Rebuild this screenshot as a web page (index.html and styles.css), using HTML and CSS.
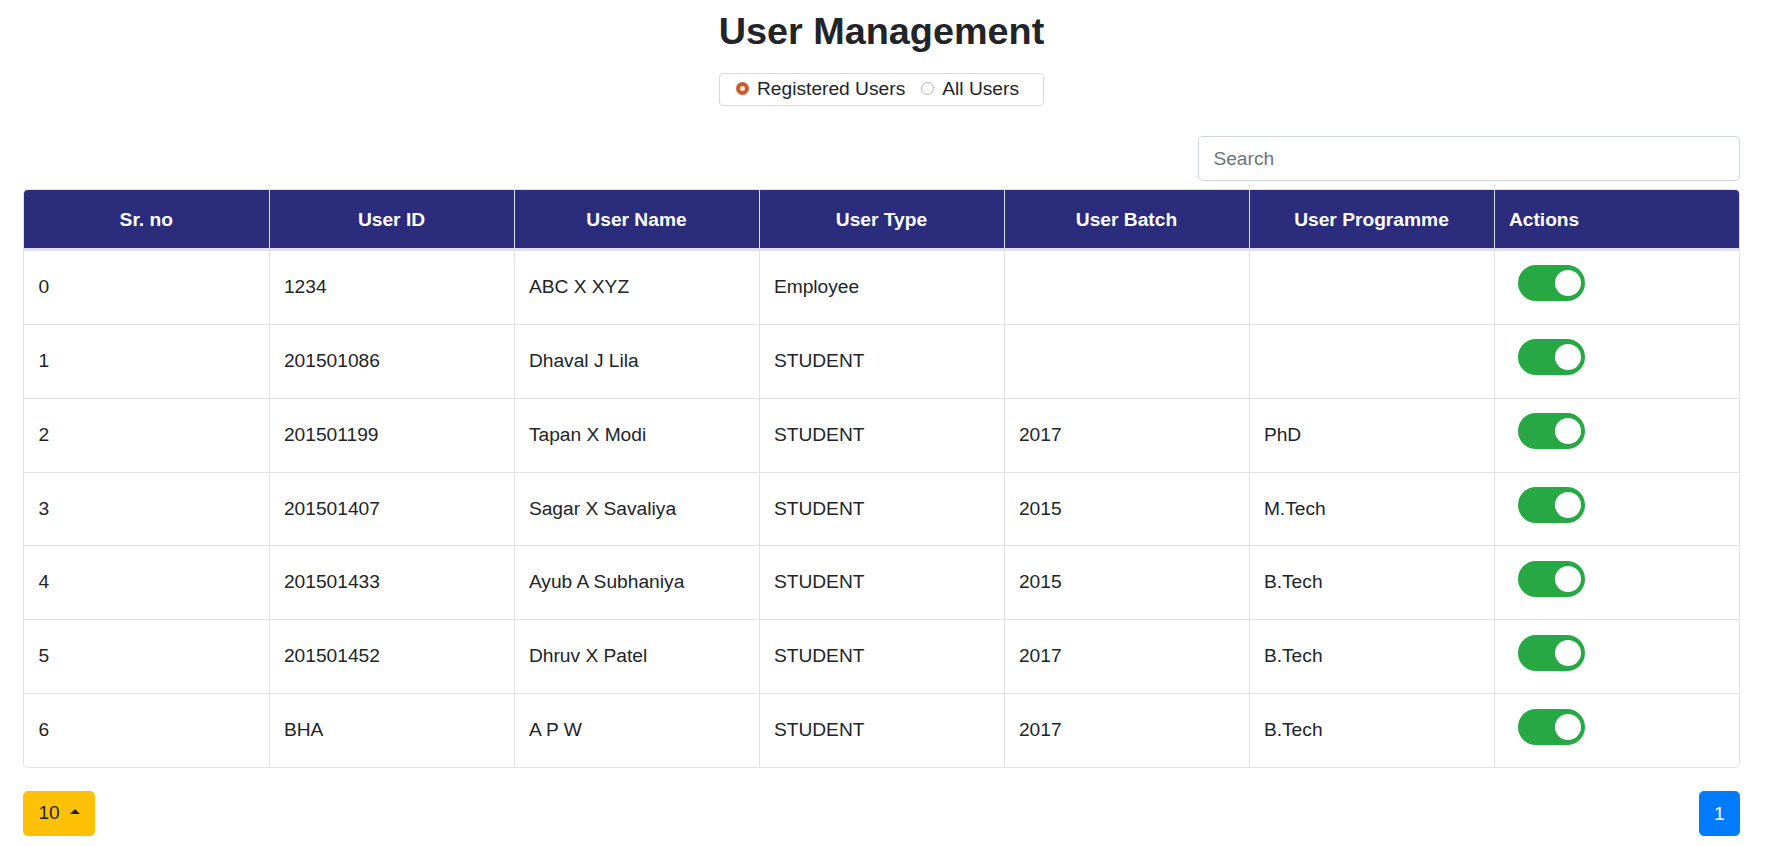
FILE: index.html
```html
<!DOCTYPE html>
<html lang="en">
<head>
<meta charset="utf-8">
<title>User Management</title>
<link rel="stylesheet" href="styles.css">
</head>
<body>
<div class="page">
  <h1 class="title">User Management</h1>
  <div class="filter-row">
    <div class="filter">
      <label class="opt"><span class="radio checked"></span>Registered Users</label>
      <label class="opt"><span class="radio"></span>All Users</label>
    </div>
  </div>
  <div class="search-row">
    <input class="search" type="text" placeholder="Search">
  </div>
  <div class="table-wrap">
    <table class="users">
      <thead>
        <tr>
          <th>Sr. no</th>
          <th>User ID</th>
          <th>User Name</th>
          <th>User Type</th>
          <th>User Batch</th>
          <th>User Programme</th>
          <th class="left">Actions</th>
        </tr>
      </thead>
      <tbody>
        <tr><td>0</td><td>1234</td><td>ABC X XYZ</td><td>Employee</td><td></td><td></td><td><span class="toggle"><span class="knob"></span></span></td></tr>
        <tr><td>1</td><td>201501086</td><td>Dhaval J Lila</td><td>STUDENT</td><td></td><td></td><td><span class="toggle"><span class="knob"></span></span></td></tr>
        <tr><td>2</td><td>201501199</td><td>Tapan X Modi</td><td>STUDENT</td><td>2017</td><td>PhD</td><td><span class="toggle"><span class="knob"></span></span></td></tr>
        <tr><td>3</td><td>201501407</td><td>Sagar X Savaliya</td><td>STUDENT</td><td>2015</td><td>M.Tech</td><td><span class="toggle"><span class="knob"></span></span></td></tr>
        <tr><td>4</td><td>201501433</td><td>Ayub A Subhaniya</td><td>STUDENT</td><td>2015</td><td>B.Tech</td><td><span class="toggle"><span class="knob"></span></span></td></tr>
        <tr><td>5</td><td>201501452</td><td>Dhruv X Patel</td><td>STUDENT</td><td>2017</td><td>B.Tech</td><td><span class="toggle"><span class="knob"></span></span></td></tr>
        <tr><td>6</td><td>BHA</td><td>A P W</td><td>STUDENT</td><td>2017</td><td>B.Tech</td><td><span class="toggle"><span class="knob"></span></span></td></tr>
      </tbody>
    </table>
  </div>
  <div class="footer">
    <button class="size-btn" type="button">10 <span class="caret"></span></button>
    <button class="page-btn" type="button">1</button>
  </div>
</div>
</body>
</html>
```
FILE: styles.css
```css
* { box-sizing: border-box; }
html, body { margin: 0; padding: 0; background: #fff; }
body {
  font-family: "Liberation Sans", Arial, sans-serif;
  font-size: 19.2px;
  line-height: 1.5;
  color: #212529;
}
.page {
  padding: 9px 39px 0 23px;
}
.title {
  margin: 0 0 19px;
  font-size: 37.8px;
  line-height: 1.2;
  font-weight: bold;
  text-align: center;
  color: #212529;
}
.filter-row {
  display: flex;
  justify-content: center;
}
.filter {
  display: flex;
  align-items: center;
  gap: 16px;
  height: 33px;
  width: 325px;
  padding: 0 0 2px 16px;
  border: 1px solid #d6d9dc;
  border-radius: 4px;
}
.opt {
  display: flex;
  align-items: center;
  gap: 8px;
  line-height: 1;
  color: #212529;
}
.radio {
  width: 13px;
  height: 13px;
  border-radius: 50%;
  border: 1px solid #b5b5b5;
  background: #fff;
  flex: none;
}
.radio.checked {
  border: 4px solid #c85a2f;
  background: #fbe9e0;
}
.search-row {
  display: flex;
  justify-content: flex-end;
  margin-top: 30px;
}
.search {
  width: 542px;
  height: 45px;
  padding: 0 14.4px;
  font-family: inherit;
  font-size: 19.2px;
  color: #495057;
  border: 1px solid #ced4da;
  border-radius: 4.8px;
  outline: none;
}
.search::placeholder { color: #6c757d; }
.table-wrap {
  margin-top: 8px;
  border: 1px solid #dee2e6;
  border-radius: 4.8px;
  overflow: hidden;
}
.users {
  width: 100%;
  table-layout: fixed;
  border-collapse: collapse;
}
.users th, .users td {
  border: 1px solid #dee2e6;
  padding: 14.4px;
  vertical-align: middle;
}
.users th {
  padding: 15.6px 14.4px 13.2px;
  background: #2b2c7b;
  color: #fff;
  font-weight: bold;
  text-align: center;
  border-top: none;
  border-bottom: 3px solid #dee2e6;
}
.users th.left { text-align: left; }
.users td { text-align: left; }
.users tr > :first-child { border-left: none; }
.users tr > :last-child { border-right: none; }
.users tbody tr:last-child td { border-bottom: none; }
.toggle {
  display: block;
  position: relative;
  width: 67px;
  height: 36px;
  margin: 0 0 8.1px 9.6px;
  border-radius: 18px;
  background: #28a745;
}
.knob {
  position: absolute;
  right: 4.5px;
  top: 5px;
  width: 26px;
  height: 26px;
  border-radius: 50%;
  background: #fff;
}
.footer {
  display: flex;
  justify-content: space-between;
  align-items: flex-start;
  margin-top: 23px;
}
.size-btn {
  font-family: inherit;
  font-size: 19.2px;
  line-height: 1.5;
  padding: 7.2px 14.4px;
  color: #212529;
  background: #ffc107;
  border: 1px solid #ffc107;
  border-radius: 4.8px;
  height: 45px;
}
.caret {
  display: inline-block;
  margin-left: 4.9px;
  vertical-align: 0.255em;
  border-left: 0.3em solid transparent;
  border-right: 0.3em solid transparent;
  border-bottom: 0.3em solid #212529;
}
.page-btn {
  font-family: inherit;
  font-size: 19.2px;
  line-height: 1.25;
  padding: 9.6px 14.4px;
  height: 45px;
  color: #fff;
  background: #007bff;
  border: 1px solid #007bff;
  border-radius: 4.8px;
}
```
